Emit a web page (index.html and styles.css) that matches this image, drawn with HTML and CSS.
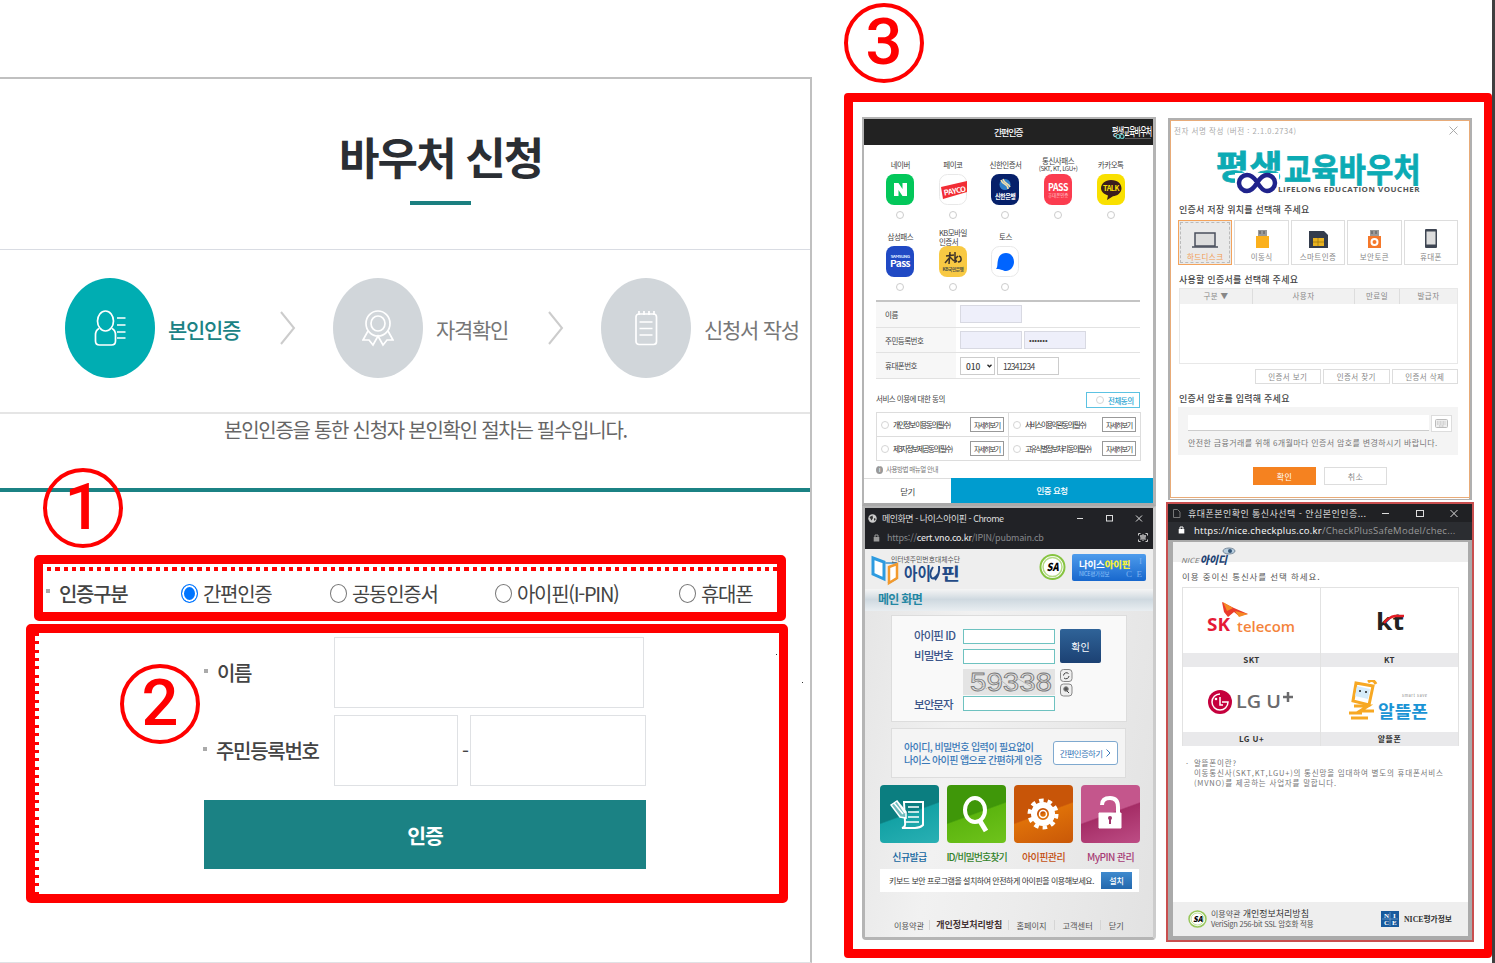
FILE: index.html
```html
<!DOCTYPE html>
<html lang="ko">
<head>
    <meta charset="UTF-8">
    <meta name="viewport" content="width=device-width, initial-scale=1.0">
    <title>바우처 신청 - 본인인증</title>
    <link rel="stylesheet" href="styles.css">
</head>
<body>
    <main class="apply">
        <header class="apply-title">
            <h1>바우처 신청</h1>
        </header>
        <ol class="steps">
            <li class="step active">
                <span class="step-icon">
                    <svg width="32" height="38" viewBox="0 0 32 38" fill="none" stroke="#fff" stroke-width="1.7"><ellipse cx="11.5" cy="12" rx="8" ry="10"/><path d="M5 19.500C2 21 1.500 23 1.500 26v6q0 4 4 4h12q4 0 4-4v-6c0-3-.5-5-3.500-6.500M23 9h8.500M23 16h8.500M23 23h8.500M23 29h8.500"/></svg>
                </span>
                <span class="step-name">본인인증</span>
            </li>
            <li class="arrow"><svg width="16" height="34" viewBox="0 0 16 34" fill="none" stroke="#ccc" stroke-width="2"><path d="M1 1l13 16L1 33"/></svg></li>
            <li class="step">
                <span class="step-icon">
                    <svg width="32" height="38" viewBox="0 0 32 38" fill="none" stroke="#fff" stroke-width="1.7"><ellipse cx="16" cy="14.500" rx="12" ry="12.500"/><ellipse cx="16" cy="14.500" rx="7" ry="7.500"/><path d="M6 22L1 31l6 0 4 5 5-9 5 9 4-5 6 0-5-9"/></svg>
                </span>
                <span class="step-name">자격확인</span>
            </li>
            <li class="arrow"><svg width="16" height="34" viewBox="0 0 16 34" fill="none" stroke="#ccc" stroke-width="2"><path d="M1 1l13 16L1 33"/></svg></li>
            <li class="step">
                <span class="step-icon">
                    <svg width="32" height="38" viewBox="0 0 32 38" fill="none" stroke="#fff" stroke-width="1.700"><rect x="6" y="5" width="20.500" height="30.500" rx="3"/><path d="M9 2v4M14 2v4M19 2v4M24 2v4M9.500 13h13M9.500 19.500h13M9.500 26h13"/></svg>
                </span>
                <span class="step-name">신청서 작성</span>
            </li>
        </ol>
        <p class="notice">본인인증을 통한 신청자 본인확인 절차는 필수입니다.</p>

        <form class="auth">
            <div class="auth-type">
                <strong class="bullet">인증구분</strong>
                <label class="opt opt1"><i class="radio on"></i>간편인증</label>
                <label class="opt opt2"><i class="radio"></i>공동인증서</label>
                <label class="opt opt3"><i class="radio"></i>아이핀(I-PIN)</label>
                <label class="opt"><i class="radio"></i>휴대폰</label>
            </div>
            <div class="auth-form">
                <div class="field">
                    <strong class="bullet">이름</strong>
                    <span class="box name"></span>
                </div>
                <div class="field field-rrn">
                    <strong class="bullet">주민등록번호</strong>
                    <span class="box rrn1"></span>
                    <em>-</em>
                    <span class="box rrn2"></span>
                </div>
                <button type="button" class="submit">인증</button>
            </div>
        </form>
    </main>
    <span class="speck speck1"></span>
    <span class="speck speck2"></span>
    <span class="num num1">1</span>
    <span class="num num2">2</span>
    <span class="num num3">3</span>

    <section class="guide">
        <div class="col col-left">

            <!-- 간편인증 -->
            <div class="simple">
                <div class="simple-head">
                    <b>간편인증</b>
                    <svg width="41" height="20" viewBox="0 0 41 20"><text x="0" y="14" font-size="11" font-weight="500" fill="#fff" textLength="39.500" lengthAdjust="spacingAndGlyphs">평생교육바우처</text><rect x="4" y="12" width="9" height="5" fill="#222"/><g fill="none" stroke="#6cc" stroke-width="1.200"><circle cx="6" cy="14.500" r="2"/><circle cx="10" cy="14.500" r="2"/></g><path d="M13 16.500h26" stroke="#888" stroke-width=".6"/></svg>
                </div>
                <div class="apps">
                    <div class="app"><span>네이버</span>
                        <svg viewBox="0 0 28 31"><rect width="28" height="31" rx="8" fill="#03c75a"/><path d="M8 22V9h4.500l4 6V9H21v13h-4.500l-4-6v6z" fill="#fff"/></svg><i></i></div>
                    <div class="app"><span>페이코</span>
                        <svg viewBox="0 0 28 31"><rect x=".5" y=".5" width="27" height="30" rx="8" fill="#fff" stroke="#e8e8e8"/><path d="M2 13l26-6v11L4 25z" fill="#f22d35"/><text x="5" y="21.500" font-size="7.500" font-weight="700" fill="#fff" textLength="22" transform="rotate(-10 5 20)" lengthAdjust="spacingAndGlyphs">PAYCO</text></svg><i></i></div>
                    <div class="app"><span>신한인증서</span>
                        <svg viewBox="0 0 28 31"><rect width="28" height="31" rx="8" fill="#06206a"/><circle cx="14" cy="10.500" r="5.500" fill="#2e7fc9"/><path d="M10 6c2 6 7 3 7 9M12 5c1 5 6 4 7 8" stroke="#f1dfae" stroke-width="1.500" fill="none"/><text x="4" y="25" font-size="6.500" font-weight="700" fill="#fff" textLength="20.500" lengthAdjust="spacingAndGlyphs">신한은행</text></svg><i></i></div>
                    <div class="app"><span>통신사패스<br><small>(SKT, KT, LGU+)</small></span>
                        <svg viewBox="0 0 28 31"><rect width="28" height="31" rx="8" fill="#fb3c4f"/><text x="4" y="16.500" font-size="10.500" font-weight="700" fill="#fff" textLength="20" lengthAdjust="spacingAndGlyphs">PASS</text><text x="4" y="23" font-size="4.500" fill="#ffc4ca" textLength="20">휴대폰인증</text></svg><i></i></div>
                    <div class="app"><span>카카오톡</span>
                        <svg viewBox="0 0 28 31"><rect width="28" height="31" rx="8" fill="#f9e000"/><path d="M14 6c7 0 10.500 4 10.500 8.500S20 22 16 22.300L10 26l1-4.500C6 20 4 17 4 14.300 4 10 8 6 14 6z" fill="#3a1d1d"/><text x="6" y="17" font-size="7" font-weight="700" fill="#f9e000" textLength="16" lengthAdjust="spacingAndGlyphs">TALK</text></svg><i></i></div>
                    <div class="app"><span>삼성패스</span>
                        <svg viewBox="0 0 28 31"><rect width="28" height="31" rx="8" fill="#2049c4"/><text x="4.500" y="12" font-size="4" font-weight="700" fill="#dbe4ff" textLength="19" lengthAdjust="spacingAndGlyphs">SAMSUNG</text><text x="4" y="21" font-size="9" font-weight="700" fill="#fff" textLength="20" lengthAdjust="spacingAndGlyphs">Pass</text></svg><i></i></div>
                    <div class="app"><span>KB모바일<br>인증서</span>
                        <svg viewBox="0 0 28 31"><rect width="28" height="31" rx="8" fill="#f8c943"/><path d="M7 10l8-1M11 6l-1 12M6 17l5-6 4 4M16 6v11M16 13l3-3M16 13l2 3M20 10c3 1 3 6-1 6" fill="none" stroke="#40342a" stroke-width="1.500"/><text x="3.500" y="24.500" font-size="5" font-weight="700" fill="#554" textLength="21" lengthAdjust="spacingAndGlyphs">KB국민은행</text></svg><i></i></div>
                    <div class="app"><span>토스</span>
                        <svg viewBox="0 0 28 31"><rect x=".5" y=".5" width="27" height="30" rx="8" fill="#fff" stroke="#e8e8e8"/><path d="M5 23c2-2 1-5 2-9 1-5 4-7 8-7 5 0 8 4 8 9s-4 9-8 9c-3 0-4-2-10-2z" fill="#0064ff"/></svg><i></i></div>
                </div>
                <div class="info">
                    <div class="info-row"><label>이름</label><span class="inp lav"></span></div>
                    <div class="info-row"><label>주민등록번호</label><span class="inp lav"></span><em></em><span class="inp lav pw">•••••••</span></div>
                    <div class="info-row"><label>휴대폰번호</label><span class="inp sel"><b>010</b><svg width="5" height="4" viewBox="0 0 5 4" fill="none" stroke="#222" stroke-width="1.300"><path d="M.5.800l2 2 2-2"/></svg></span><span class="inp tel">12341234</span></div>
                </div>
                <div class="agree-head"><span>서비스 이용에 대한 동의</span><b><i></i>전체동의</b></div>
                <div class="agree">
                    <div><i></i><span>개인정보 이용동의(필수)</span><button>자세히보기</button></div>
                    <div><i></i><span>서비스이용약관동의(필수)</span><button>자세히보기</button></div>
                    <div><i></i><span>제3자정보제공동의(필수)</span><button>자세히보기</button></div>
                    <div><i></i><span>고유식별정보처리동의(필수)</span><button>자세히보기</button></div>
                </div>
                <p class="manual"><i>i</i>사용방법 매뉴얼 안내</p>
                <div class="simple-btns"><span>닫기</span><b>인증 요청</b></div>
            </div>

            <!-- 아이핀 -->
            <div class="ipin">
                <div class="chrome">
                    <div class="chrome-title">
                        <svg width="9" height="9" viewBox="0 0 9 9"><circle cx="4.500" cy="4.500" r="4.200" fill="#ccc"/><path d="M1.500 3l3-1.500L5 4 3.500 6.500zM6 4l2 1-2 2z" fill="#333"/></svg>
                        <span>메인화면 - 나이스아이핀 - Chrome</span>
                        <svg class="win" width="72" height="9" viewBox="0 0 72 9" fill="none" stroke="#ddd"><path d="M1 4.500h6M60 1.500l6 6M66 1.500l-6 6"/><rect x="30.500" y="1.500" width="6" height="5.500"/></svg>
                    </div>
                    <div class="chrome-url">
                        <svg width="7" height="8" viewBox="0 0 7 8"><rect x=".7" y="3" width="5.600" height="4.500" fill="#999"/><path d="M2 3V1h3v2" fill="none" stroke="#999"/></svg>
                        <span>https://<b>cert.vno.co.kr</b>/IPIN/pubmain.cb</span>
                        <svg class="qr" width="10" height="9" viewBox="0 0 10 9" fill="none" stroke="#ccc"><path d="M.5 2.500V.5h2M7.500.5h2v2M9.500 6.500v2h-2M2.500 8.500h-2v-2M2 3h6M3 5h4M3 2v5M5 1v7M7 2v5"/></svg>
                    </div>
                </div>
                <div class="ipin-head">
                    <svg width="90" height="34" viewBox="0 0 90 34"><path d="M2 4l11 4v17L2 20z" fill="#fff" stroke="#2d9be0" stroke-width="3"/><path d="M14 9h11v16l-8 4" fill="none" stroke="#66a9d8" stroke-width="2"/><path d="M18 13l8-3v14l-8 5z" fill="#fff" stroke="#f29a2e" stroke-width="2.500"/><text x="20" y="8" font-size="7" fill="#555" textLength="69" lengthAdjust="spacingAndGlyphs">인터넷주민번호대체수단</text><text x="33" y="26" font-size="16.500" font-weight="700" fill="#234a86" textLength="27" lengthAdjust="spacingAndGlyphs">아이</text><path d="M62 13q-4 6-2 10t7-3M68 12q1 8-4 14" fill="none" stroke="#234a86" stroke-width="2"/><text x="70" y="26" font-size="16.500" font-weight="700" fill="#234a86" textLength="19" lengthAdjust="spacingAndGlyphs">핀</text></svg>
                    <svg class="sa" width="27" height="28" viewBox="0 0 27 28"><circle cx="13.500" cy="14" r="12" fill="#fff" stroke="#86c440" stroke-width="2"/><circle cx="13.500" cy="14" r="9.500" fill="none" stroke="#b5da86" stroke-width="1.500"/><text x="7.500" y="18" font-size="11" font-weight="900" font-style="italic" textLength="12" lengthAdjust="spacingAndGlyphs">SA</text></svg>
                    <div class="nice-banner"><p>나이스<b>아이핀</b></p><small>NICE평가정보</small><em>I<br>C &nbsp;E</em></div>
                </div>
                <h3>메인 화면</h3>
                <div class="login">
                    <div class="login-labels"><b>아이핀 ID</b><b>비밀번호</b><b class="sec">보안문자</b></div>
                    <div class="login-inputs">
                        <span></span><span></span>
                        <svg width="92" height="26" viewBox="0 0 92 26"><rect width="92" height="26" fill="#e4e4e4"/><text x="7" y="22" font-family="Liberation Sans, sans-serif" font-size="25" fill="#e0e0e0" stroke="#777" stroke-width=".8" textLength="82" lengthAdjust="spacingAndGlyphs">59338</text><path d="M8 8l16 12M30 5l20 16M52 8l20 12" stroke="#bbb"/></svg>
                        <span></span>
                    </div>
                    <div class="login-side">
                        <button>확인</button>
                        <svg width="13" height="28" viewBox="0 0 13 28" fill="#eee" stroke="#888"><rect x=".5" y=".5" width="11.500" height="12" rx="3"/><rect x=".5" y="15" width="11.500" height="12" rx="3"/><path d="M3.500 6.500a3 3 0 0 1 5-2M9 7a3 3 0 0 1-5 2" stroke="#444" fill="none"/><circle cx="6" cy="20" r="2.300" fill="#555"/><path d="M7 22l2 2" stroke="#444"/></svg>
                    </div>
                </div>
                <div class="easy"><p>아이디, 비밀번호 입력이 필요없이<br>나이스 아이핀 앱으로 간편하게 인증</p><button>간편인증하기 <svg width="5" height="8" viewBox="0 0 5 8" fill="none" stroke="#3a79b8"><path d="M.5.5L4 4 .5 7.500"/></svg></button></div>
                <div class="tiles">
                    <div class="tile t1"><svg viewBox="0 0 59 58"><path d="M24 17h19v23q-3 3-8 3H22q4-1 3-6z" fill="none" stroke="#fff" stroke-width="2"/><path d="M28 22h11M28 27h11M28 32h11M26 37h13" stroke="#fff" stroke-width="1.500"/><path d="M11 20l6-4 9 11 0 6-6-1zM14 18l9 11M17 16l8 12" stroke="#fff" stroke-width="1.500" fill="#6fbcbd"/></svg><b>신규발급</b></div>
                    <div class="tile t2"><svg viewBox="0 0 59 58"><ellipse cx="28" cy="25" rx="10" ry="12" fill="none" stroke="#fff" stroke-width="4"/><path d="M33 36l6 10" stroke="#fff" stroke-width="5"/></svg><b>ID/비밀번호찾기</b></div>
                    <div class="tile t3"><svg viewBox="0 0 59 58"><circle cx="29" cy="29" r="13.500" fill="none" stroke="#fff" stroke-width="4" stroke-dasharray="4.500 3.980"/><circle cx="29" cy="29" r="9" fill="none" stroke="#fff" stroke-width="6"/><circle cx="29" cy="29" r="3.500" fill="none" stroke="#fff" stroke-width="1.500"/></svg><b>아이핀관리</b></div>
                    <div class="tile t4"><svg viewBox="0 0 59 58"><path d="M21 20q0-7 8-7t8 9v7" fill="none" stroke="#fff" stroke-width="4"/><path d="M18 28h22v15H18z" fill="#fff" stroke="#fff"/><circle cx="29" cy="33" r="2" fill="#a2346c"/><path d="M29 33v6" stroke="#a2346c" stroke-width="2"/></svg><b>MyPIN 관리</b></div>
                </div>
                <div class="keyboard"><span>키보드 보안 프로그램을 설치하여 안전하게 아이핀을 이용해보세요.</span><button>설치</button></div>
                <div class="ipin-foot"><span>이용약관</span><b>개인정보처리방침</b><span>홈페이지</span><span>고객센터</span><span>닫기</span></div>
            </div>
        </div>

        <div class="col col-right">

            <!-- 공동인증서 -->
            <div class="cert">
                <div class="cert-head"><span>전자 서명 작성 (버전 : 2.1.0.2734)</span><svg width="9" height="9" viewBox="0 0 9 9" stroke="#aaa"><path d="M.5.5l8 8M8.500.5l-8 8"/></svg></div>
                <svg class="cert-logo" width="206" height="48" viewBox="0 0 206 48">
                    <g font-size="36" font-weight="700" fill="#0cabb4" stroke="#0cabb4" stroke-width=".8">
                        <text x="0" y="30" font-size="33" textLength="67" lengthAdjust="spacingAndGlyphs">평생</text>
                        <text x="68" y="33" font-size="33" textLength="137" lengthAdjust="spacingAndGlyphs">교육바우처</text>
                    </g>
                    <path d="M19 24h44v23H19z" fill="#fff"/>
                    <path d="M41 33c-4-6-7-7-10-7a8 8 0 0 0 0 16c4 0 7-3 10-8 3-5 6-8 10-8a8 8 0 0 1 0 16c-3 0-6-2-10-9z" fill="none" stroke="#20238c" stroke-width="4.500"/>
                    <text x="62" y="43" font-family="Open Sans, sans-serif" font-size="6.500" font-weight="700" fill="#555" textLength="142" lengthAdjust="spacingAndGlyphs">LIFELONG EDUCATION VOUCHER</text>
                </svg>
                <h4>인증서 저장 위치를 선택해 주세요</h4>
                <div class="media">
                    <div class="on"><svg width="28" height="22" viewBox="0 0 28 22"><rect x="4" y="5" width="20" height="13" fill="#ddd" stroke="#4a4f5c" stroke-width="1.500"/><path d="M1 19h26" stroke="#4a4f5c" stroke-width="1.500"/></svg><span>하드디스크</span></div>
                    <div><svg width="28" height="22" viewBox="0 0 28 22"><rect x="10" y="2" width="9" height="7" fill="#999"/><path d="M12 3v3M16 3v3" stroke="#555"/><rect x="8" y="8" width="13" height="12" fill="#fbb01c"/></svg><span>이동식</span></div>
                    <div><svg width="28" height="22" viewBox="0 0 28 22"><path d="M5 3h15l4 4v13H5z" fill="#343c4c"/><rect x="9" y="10" width="11" height="8" fill="#e9b220"/><path d="M9 14h11M14 10v8" stroke="#9a7410" stroke-width=".7"/></svg><span>스마트인증</span></div>
                    <div><svg width="28" height="22" viewBox="0 0 28 22"><rect x="10" y="2" width="9" height="7" fill="#999"/><path d="M12 3v3M16 3v3" stroke="#555"/><rect x="8" y="8" width="13" height="12" fill="#f5782a"/><circle cx="14.500" cy="14" r="3" fill="none" stroke="#fff" stroke-width="2"/></svg><span>보안토큰</span></div>
                    <div><svg width="28" height="22" viewBox="0 0 28 22"><rect x="8" y="1" width="12" height="19" rx="1" fill="#3f4653"/><rect x="9.500" y="3.500" width="9" height="13" fill="#ddd"/></svg><span>휴대폰</span></div>
                </div>
                <h4 class="h-use">사용할 인증서를 선택해 주세요</h4>
                <div class="cert-table"><div><span>구분 ▼</span><span>사용자</span><span>만료일</span><span>발급자</span></div></div>
                <div class="cert-tools"><span>인증서 보기</span><span>인증서 찾기</span><span>인증서 삭제</span></div>
                <h4 class="h-pw">인증서 암호를 입력해 주세요</h4>
                <div class="cert-pw">
                    <div><span></span><b><svg width="13" height="9" viewBox="0 0 13 9"><rect x=".5" y=".5" width="12" height="8" rx="1" fill="#eee" stroke="#bbb"/><path d="M2 3h9M2 5h9M4 7h5" stroke="#bbb" stroke-dasharray="1 .500"/></svg></b></div>
                    <p>안전한 금융거래를 위해 6개월마다 인증서 암호를 변경하시기 바랍니다.</p>
                </div>
                <div class="cert-btns"><b>확인</b><span>취소</span></div>
            </div>

            <!-- 휴대폰 -->
            <div class="phone">
                <div class="phone-title">
                    <svg width="8" height="9" viewBox="0 0 8 9" fill="none" stroke="#777"><path d="M.5.5h4l2.500 2.500v5.500H.5z"/></svg>
                    <span>휴대폰본인확인 통신사선택 - 안심본인인증...</span>
                    <svg class="win" width="77" height="9" viewBox="0 0 77 9" fill="none" stroke="#ddd"><path d="M1 4.500h7M69.500 1l7 7M76.500 1l-7 7"/><rect x="35.500" y="1.500" width="7" height="6"/></svg>
                </div>
                <div class="phone-url">
                    <svg width="7" height="8" viewBox="0 0 7 8"><rect x=".7" y="3" width="5.600" height="4.500" fill="#fff"/><path d="M2 3V1h3v2" fill="none" stroke="#fff"/></svg>
                    <span>https://nice.checkplus.co.kr<em>/CheckPlusSafeModel/chec...</em></span>
                </div>
                <div class="phone-page">
                    <div class="phone-logo"><svg width="58" height="22" viewBox="0 0 58 22"><text x="0" y="17" font-size="7" font-style="italic" fill="#777" textLength="18" lengthAdjust="spacingAndGlyphs">NICE</text><text x="19" y="18" font-size="11" font-weight="900" font-style="italic" fill="#1d4273" textLength="27" lengthAdjust="spacingAndGlyphs">아이디</text><ellipse cx="48" cy="5" rx="6" ry="3" fill="#b9cfe0" stroke="#789"/><circle cx="49" cy="5" r="2" fill="#357"/></svg></div>
                    <p class="phone-lead">이용 중이신 통신사를 선택 하세요.</p>
                    <div class="carriers">
                        <div><svg width="96" height="44" viewBox="0 0 96 44"><path d="M18 1l12 6 14 6-9 2-5-4-6 5-4-5z" fill="#ea3a2b"/><path d="M19 1l10 6-6 3z" fill="#f58a25"/><path d="M31 10l13 3-9 3z" fill="#f58a25"/><text x="3" y="30" font-family="Open Sans, sans-serif" font-size="18" font-weight="700" fill="#e51937" textLength="23" lengthAdjust="spacingAndGlyphs">SK</text><text x="33" y="30.500" font-family="Open Sans, sans-serif" font-size="14" font-weight="600" fill="#f4843c" textLength="58" lengthAdjust="spacingAndGlyphs">telecom</text></svg><b>SKT</b></div>
                        <div><svg width="96" height="44" viewBox="0 0 96 44"><text x="34" y="29" font-family="Open Sans, sans-serif" font-size="24" font-weight="700" fill="#222" textLength="28" lengthAdjust="spacingAndGlyphs">kt</text><path d="M42 22q5-6 11-7h9" fill="none" stroke="#e31c25" stroke-width="2.500"/></svg><b>KT</b></div>
                        <div><svg width="96" height="44" viewBox="0 0 96 44"><circle cx="16" cy="22" r="12" fill="#c5003d"/><path d="M16 14a8 8 0 1 0 8 8h-6M16 17v8h3" fill="none" stroke="#fff" stroke-width="1.500"/><circle cx="12" cy="19" r="1.300" fill="#fff"/><text x="32" y="28" font-family="Open Sans, sans-serif" font-size="18" font-weight="600" fill="#6b6b6d" textLength="45" lengthAdjust="spacingAndGlyphs">LG U</text><path d="M84 12v10M79 17h10" stroke="#6b6b6d" stroke-width="2.500"/></svg><b>LG U+</b></div>
                        <div><svg width="96" height="44" viewBox="0 0 96 44"><path d="M14 3l17 3-4 19-16-4z" fill="#fff" stroke="#f7a823" stroke-width="3"/><path d="M15 6l13 3-2 10-13-3z" fill="#d6ecfa"/><circle cx="18" cy="11" r="1" fill="#222"/><circle cx="24" cy="12" r="1" fill="#222"/><path d="M26 2q5-4 8 2M12 26h14l-8 5h14M7 33h13M9 38h17" fill="none" stroke="#f7a823" stroke-width="3"/><text x="36" y="38" font-size="17" font-weight="700" fill="#1a94d5" textLength="50" lengthAdjust="spacingAndGlyphs">알뜰폰</text><text x="60" y="17" font-size="4" fill="#888" textLength="25">smart save</text></svg><b>알뜰폰</b></div>
                    </div>
                    <div class="phone-note"><i>·</i><p>알뜰폰이란?<br>이동통신사(SKT,KT,LGU+)의 통신망을 임대하여 별도의 휴대폰서비스<br>(MVNO)를 제공하는 사업자를 말합니다.</p></div>
                    <div class="phone-foot">
                        <svg width="19" height="18" viewBox="0 0 19 18"><ellipse cx="9.500" cy="9" rx="8.500" ry="8" fill="#fff" stroke="#97c75a" stroke-width="1.500"/><ellipse cx="9.500" cy="9" rx="6.500" ry="6" fill="none" stroke="#c0dfa0"/><text x="5" y="12" font-size="8" font-weight="900" font-style="italic" textLength="9.500" lengthAdjust="spacingAndGlyphs">SA</text></svg>
                        <p>이용약관 <b>개인정보처리방침</b><br><small>VeriSign 256-bit SSL 암호화 적용</small></p>
                        <svg class="nice" width="72" height="16" viewBox="0 0 72 16"><rect width="18" height="16" fill="#185a9d"/><g font-family="Liberation Serif, serif" font-size="7" font-weight="700" fill="#fff"><text x="3" y="6.500">N</text><text x="12" y="6.500">I</text><text x="3" y="14">C</text><text x="11" y="14">E</text></g><path d="M9 1v14M1 8h16" stroke="#8bb4dc" stroke-width=".6"/><text x="23" y="11" font-family="Liberation Serif, Noto Sans CJK KR, serif" font-size="8" font-weight="700" fill="#333" textLength="48" lengthAdjust="spacingAndGlyphs">NICE평가정보</text></svg>
                    </div>
                </div>
            </div>
        </div>
    </section>
    <aside class="edge"></aside>
</body>
</html>
```
FILE: styles.css
```css
* {
    box-sizing: border-box;
}
body {
    margin: 0;
    width: 1495px;
    height: 963px;
    overflow: hidden;
    display: flex;
    align-items: flex-start;
    position: relative;
    background: #fff;
    color: #333;
    font-family: "Noto Sans CJK KR", "Noto Sans", sans-serif;
    white-space: nowrap;
}
h1, h3, h4, p, ol {
    margin: 0;
    padding: 0;
    list-style: none;
}
i, em {
    font-style: normal;
}
button {
    font-family: inherit;
    padding: 0;
    border: 0;
    background: none;
}
svg {
    display: block;
    flex: none;
}

/* 신청 화면 */
.apply {
    width: 812px;
    height: 886px;
    margin-top: 77px;
    flex: none;
    border-top: 2px solid #c0c0c0;
    border-right: 2px solid #c0c0c0;
    border-bottom: 1px solid #e0e2e5;
}
.apply-title {
    height: 171px;
    border-bottom: 1px solid #d9dce3;
    padding: 46px 0 0 339px;
}
.apply-title h1 {
    width: 204px;
    height: 80px;
    font-size: 44px;
    line-height: 62px;
    font-weight: 700;
    letter-spacing: -1.9px;
    color: #2a2e33;
}
.apply-title h1::after {
    content: "";
    display: block;
    width: 61px;
    height: 4px;
    margin: 14px 0 0 71px;
    background: #1b7f80;
}
.steps {
    display: flex;
    align-items: center;
    height: 164px;
    padding: 0 0 6px 65px;
    border-bottom: 2px solid #e5e5e5;
}
.step {
    display: flex;
    align-items: center;
    width: 215px;
    flex: none;
}
.step-icon {
    width: 90px;
    height: 100px;
    border-radius: 50%;
    background: #d1d6da;
    display: flex;
    align-items: center;
    justify-content: center;
    flex: none;
}
.active .step-icon {
    background: #00adb2;
}
.step-name {
    margin: 1px 0 0 13px;
    font-size: 21px;
    letter-spacing: -1.3px;
    color: #777;
}
.active .step-name {
    color: #1b8284;
    font-weight: 500;
}
.arrow {
    width: 53px;
    flex: none;
}
.notice {
    height: 74px;
    padding-left: 224px;
    font-size: 20px;
    line-height: 32px;
    letter-spacing: -1.27px;
    color: #666;
}
.auth {
    border-top: 4px solid #1b8284;
    height: 470px;
    padding: 63px 0 0 26px;
}
.auth-type {
    width: 752px;
    height: 66px;
    margin-left: 8px;
    border: 9px solid #f00;
    border-radius: 5px;
    display: flex;
    align-items: center;
    padding: 10px 0 0 3px;
    font-size: 20px;
    letter-spacing: -1.3px;
    color: #444;
    background: repeating-linear-gradient(90deg, transparent 0 4px, #f00 4px 8.35px) 0 3px / 100% 4px no-repeat;
}
.bullet {
    font-weight: 500;
    display: flex;
    align-items: center;
}
.bullet::before {
    content: "";
    width: 4px;
    height: 4px;
    margin: 0 9px 4px 0;
    background: #aaa;
}
.auth-type .bullet {
    width: 135px;
}
.opt {
    display: flex;
    align-items: center;
}
.opt1 {
    width: 149px;
}
.opt2 {
    width: 165px;
}
.opt3 {
    width: 184px;
}
.radio {
    width: 17px;
    height: 19px;
    margin-right: 5px;
    border: 1px solid #777;
    border-radius: 50%;
}
.radio.on {
    border: 1.5px solid #0075ff;
    background: #0075ff;
    box-shadow: inset 0 0 0 2px #fff;
}
.auth-form {
    width: 762px;
    height: 279px;
    margin-top: 3px;
    border: 9px solid #f00;
    border-radius: 5px;
    padding: 4px 0 0 169px;
    background: repeating-linear-gradient(#f00 0 3px, transparent 3px 8.35px) 0 0 / 4px 100% no-repeat;
}
.field {
    display: flex;
    align-items: center;
    height: 71px;
    margin-bottom: 7px;
    font-size: 20px;
    letter-spacing: -1.3px;
    color: #444;
}
.field .bullet {
    width: 130px;
}
.field-rrn .bullet {
    margin-left: -1px;
    width: 131px;
}
.field em {
    width: 12px;
    padding-left: 4px;
}
.box {
    height: 71px;
    border: 1.5px solid #dfe1e4;
    background: #fff;
}
.name {
    width: 310px;
}
.rrn1 {
    width: 124px;
}
.rrn2 {
    width: 176px;
}
.submit {
    width: 442px;
    height: 69px;
    margin-top: 14px;
    background: #1b8284;
    color: #fff;
    font-size: 20.5px;
    font-weight: 700;
    letter-spacing: -1px;
    display: block;
}
.speck {
    position: absolute;
    width: 1px;
    height: 1px;
    background: #333;
}
.speck1 {
    left: 776px;
    top: 654px;
}
.speck2 {
    left: 802px;
    top: 682px;
}

/* 번호 표시 */
.num {
    position: absolute;
    width: 80px;
    height: 80px;
    border: 4.5px solid #f00;
    border-radius: 50%;
    color: #f00;
    font-family: Roboto, sans-serif;
    font-size: 65px;
    font-weight: 500;
    line-height: 71px;
    text-align: center;
}
.num1 {
    left: 43px;
    top: 468px;
}
.num2 {
    left: 120px;
    top: 664px;
}
.num3 {
    left: 844px;
    top: 3px;
}

/* 인증 수단 안내 */
.guide {
    width: 648px;
    height: 865px;
    margin: 93px 0 0 32px;
    flex: none;
    border: 9px solid #f00;
    border-right-width: 8px;
    border-radius: 4px;
    padding: 15px 0 0 9px;
    display: flex;
    gap: 10px;
}
.col-left {
    width: 294px;
    flex: none;
}
.col-right {
    width: 308px;
    flex: none;
    padding-top: 1px;
}
.edge {
    width: 3px;
    height: 963px;
    background: #404040;
    flex: none;
}

.simple {
    height: 389px;
    border: 2px solid #b4b4b4;
    border-right-width: 3px;
    border-bottom: 3px solid #aaa;
    font-size: 7.5px;
    letter-spacing: -0.5px;
    line-height: 9px;
    color: #444;
}
.simple-head {
    height: 26px;
    background: #222;
    color: #fff;
    display: flex;
    align-items: center;
    padding-left: 130px;
    font-size: 9px;
    letter-spacing: -1.2px;
}
.simple-head b {
    width: 118px;
    font-weight: 500;
}
.apps {
    display: grid;
    grid-template-columns: repeat(5, 52.6px);
    grid-auto-rows: 72px;
    padding: 10px 0 0 10px;
    height: 155px;
}
.app {
    display: flex;
    flex-direction: column;
    align-items: center;
}
.app span {
    height: 19px;
    display: grid;
    align-content: center;
    justify-items: center;
}
.app small {
    font-size: 6.3px;
    line-height: 8px;
}
.app svg {
    width: 28px;
    height: 31px;
}
.app i {
    width: 8px;
    height: 8px;
    margin-top: 6px;
    border: 1px solid #ccc;
    border-radius: 50%;
}
.info {
    width: 264px;
    margin-left: 12px;
    border-top: 2px solid #c4c4c4;
}
.info-row {
    display: flex;
    align-items: center;
    height: 25.7px;
    border-bottom: 1px solid #e2e2e2;
}
.info-row label {
    width: 80px;
    height: 100%;
    padding-left: 9px;
    line-height: 25px;
    background: #f7f7f7;
    margin-right: 4px;
}
.info-row em {
    width: 2px;
}
.inp {
    width: 62px;
    height: 18px;
    border: 1px solid #ccc;
    line-height: 16px;
}
.lav {
    background: #eeeffa;
    border-color: #d8d9e2;
}
.pw {
    padding-left: 4px;
    font-size: 7px;
    font-weight: 700;
    letter-spacing: 0;
}
.sel {
    width: 35px;
    margin-right: 2px;
    padding: 0 2px 0 5px;
    display: flex;
    align-items: center;
    justify-content: space-between;
    font-size: 8.5px;
    letter-spacing: -0.1px;
}
.sel b {
    font-weight: 500;
}
.tel {
    padding-left: 5px;
    font-size: 8.5px;
    letter-spacing: -0.8px;
}
.agree-head {
    display: flex;
    justify-content: space-between;
    align-items: center;
    width: 264px;
    height: 16px;
    margin: 13px 0 4px 12px;
}
.agree-head span {
    margin-top: -3px;
}
.agree-head b {
    width: 54px;
    height: 16px;
    border: 1px solid #5cc2e2;
    color: #2aa6d3;
    font-weight: 500;
    display: flex;
    align-items: center;
    padding-left: 9px;
    gap: 4px;
}
.agree-head i, .agree i {
    width: 8px;
    height: 8px;
    border: 1px solid #d5d5d5;
    border-radius: 50%;
    flex: none;
}
.agree {
    width: 265px;
    height: 49px;
    margin-left: 12px;
    display: grid;
    grid-template-columns: 1fr 1fr;
    border-top: 1px solid #ddd;
    border-left: 1px solid #ddd;
}
.agree div {
    border-right: 1px solid #ddd;
    border-bottom: 1px solid #ddd;
    display: flex;
    align-items: center;
    padding: 0 4px;
    letter-spacing: -1.5px;
}
.agree span {
    flex: 1;
    margin-left: 4px;
    color: #333;
}
.agree div:nth-child(2) span, .agree div:nth-child(4) span {
    letter-spacing: -1.6px;
}
.agree button {
    width: 34px;
    height: 15px;
    border: 1px solid #999;
    font-size: 7px;
    letter-spacing: -1.2px;
    color: #333;
}
.manual {
    height: 17px;
    padding-left: 12px;
    display: flex;
    align-items: center;
    font-size: 6.5px;
    letter-spacing: -0.5px;
    color: #777;
}
.manual i {
    width: 7px;
    height: 8px;
    margin-right: 3px;
    border-radius: 50%;
    background: #999;
    color: #fff;
    text-align: center;
    line-height: 7px;
}
.simple-btns {
    display: flex;
    height: 25px;
    text-align: center;
    line-height: 25px;
    font-size: 8.5px;
}
.simple-btns span {
    width: 87px;
    border-top: 1px solid #ddd;
}
.simple-btns b {
    flex: 1;
    background: #009ccf;
    color: #fff;
    font-weight: 500;
}

.ipin {
    height: 434px;
    border: 3px solid #b5b5b5;
    border-top-width: 2px;
    border-right-color: #ccc;
    border-radius: 0 0 4px 4px;
    background: linear-gradient(100deg, #e4e4e4, #f1f1f1 35%, #ececec 60%, #e2e2e2);
}
.chrome {
    height: 41px;
    background: #212226;
    color: #ddd;
    font-size: 9px;
    padding: 1px 5px 0 3px;
}
.chrome-title {
    display: flex;
    align-items: center;
    height: 19px;
    gap: 5px;
    letter-spacing: -0.5px;
}
.win, .qr {
    margin-left: auto;
}
.chrome-url {
    display: flex;
    align-items: center;
    height: 19px;
    padding-left: 5px;
    gap: 7px;
    color: #85878b;
    letter-spacing: -0.2px;
}
.chrome-url b {
    color: #eee;
    font-weight: 400;
}
.ipin-head {
    height: 40px;
    padding: 5px 7px 0 6px;
    background: #eee;
    display: flex;
    align-items: flex-start;
}
.sa {
    margin: -1px 6px 0 78px;
}
.nice-banner {
    position: relative;
    width: 74px;
    height: 27px;
    padding: 4px 0 0 7px;
    border-radius: 2px;
    background: linear-gradient(#4e9cec, #1767cd);
    color: #fff;
}
.nice-banner p {
    font-size: 9.5px;
    font-weight: 700;
    line-height: 12px;
    letter-spacing: -0.2px;
}
.nice-banner p b {
    color: #f5f03b;
}
.nice-banner small {
    display: block;
    font-size: 5.5px;
    line-height: 8px;
    color: #8fc2fa;
    letter-spacing: -0.3px;
}
.nice-banner em {
    position: absolute;
    right: 4px;
    top: 1px;
    font: 9px/13px "Liberation Serif", serif;
    color: #7ab0f0;
    text-align: right;
}
.ipin h3 {
    height: 22px;
    padding-left: 13px;
    font-size: 12px;
    line-height: 20px;
    letter-spacing: -0.7px;
    color: #2387a3;
    background: linear-gradient(#f5f5f5, #cfd9e0 48%, #e9eef1);
}
.login {
    width: 236px;
    height: 107px;
    margin: 4px 0 0 26px;
    padding: 13px 0 0 22px;
    display: flex;
    border: 1px solid #ddd;
    background: #f9f9f9;
}
.login-labels {
    width: 49px;
    font-size: 11.5px;
    line-height: 20px;
    letter-spacing: -0.9px;
    color: #3c5589;
}
.login-labels b {
    display: block;
    margin-top: -4px;
    margin-bottom: 4px;
    font-weight: 500;
}
.login-labels .sec {
    margin-top: 29px;
}
.login-inputs span {
    display: block;
    width: 92px;
    height: 15px;
    margin-bottom: 5px;
    border: 1px solid #6ec2c0;
    background: #fff;
}
.login-inputs svg + span {
    margin-top: 1px;
}
.login-side {
    margin-left: 5px;
}
.login-side button {
    width: 41px;
    height: 34px;
    margin-bottom: 6px;
    display: block;
    background: linear-gradient(#2f6398, #1c4173);
    border-radius: 2px;
    color: #fff;
    font-size: 10px;
}
.easy {
    width: 235px;
    height: 50px;
    margin: 6px 0 7px 26px;
    padding: 0 7px 0 12px;
    border: 1px solid #ddd;
    background: #f4f4f4;
    display: flex;
    align-items: center;
    justify-content: space-between;
    font-size: 10px;
    line-height: 13px;
    letter-spacing: -0.6px;
    color: #3a79b8;
    font-weight: 500;
}
.easy button {
    width: 65px;
    height: 24px;
    border: 1px solid #7fa9cf;
    border-radius: 3px;
    background: #fff;
    color: #3a79b8;
    font-size: 8.5px;
    letter-spacing: -0.7px;
    display: flex;
    align-items: center;
    justify-content: center;
    gap: 4px;
}
.tiles {
    display: flex;
    gap: 8px;
    padding-left: 15px;
    height: 84px;
}
.tile {
    width: 59px;
    display: flex;
    flex-direction: column;
    align-items: center;
    font-size: 10px;
    line-height: 28px;
    letter-spacing: -0.6px;
}
.tile svg {
    width: 59px;
    height: 58px;
    border-radius: 4px;
}
.tile b {
    font-weight: 500;
}
.t1 {
    color: #14669f;
}
.t1 svg {
    background: linear-gradient(160deg, #0b7e80 48%, #14a2a5 50%, #2ab0b4);
}
.t2 {
    color: #33832a;
    letter-spacing: -1px;
}
.t2 svg {
    background: linear-gradient(160deg, #3f9709 48%, #5cb50f 50%, #6fc31c);
}
.t3 {
    color: #c44f12;
}
.t3 svg {
    background: linear-gradient(160deg, #c85508 48%, #df7109 50%, #c95808);
}
.t4 {
    color: #a73c76;
}
.t4 svg {
    background: linear-gradient(160deg, #c4568c 48%, #a52d66 50%, #bd4d85);
}
.keyboard {
    width: 259px;
    height: 23px;
    margin-left: 15px;
    padding: 0 7px 0 9px;
    background: #fff;
    display: flex;
    align-items: center;
    justify-content: space-between;
    font-size: 8px;
    letter-spacing: -0.48px;
}
.keyboard button {
    width: 31px;
    height: 17px;
    background: linear-gradient(#3f8ace, #2468ad);
    color: #fff;
    font-size: 8px;
    font-weight: 500;
}
.ipin-foot {
    display: flex;
    align-items: center;
    height: 20px;
    margin-top: 23px;
    padding-left: 29px;
    font-size: 8.2px;
    color: #555;
}
.ipin-foot span + span {
    margin-left: 7px;
    padding-left: 8px;
    border-left: 1px solid #d5d5d5;
    line-height: 10px;
}
.ipin-foot b {
    font-size: 9px;
    font-weight: 700;
    color: #433;
    margin: 0 6px 0 5px;
    padding-left: 6px;
    border-left: 1px solid #d5d5d5;
    line-height: 10px;
}
.ipin-foot b + span {
    padding-left: 7px;
    border-left: 1px solid #d5d5d5;
    line-height: 10px;
}

/* 공동인증서 창 */
.cert {
    width: 304px;
    height: 382px;
    margin-left: 2px;
    border: 2px solid #b0b0b0;
    border-right-width: 3px;
    border-bottom-width: 1px;
    outline: 1px solid #e8ab78;
    outline-offset: -3px;
    padding: 0 11px 0 9px;
    font-size: 8px;
    line-height: 10px;
    color: #888;
    letter-spacing: 0.4px;
}
.cert-head {
    height: 21px;
    margin: 0 0 0 -5px;
    display: flex;
    align-items: center;
    justify-content: space-between;
    font-size: 7.5px;
    letter-spacing: 0.55px;
    color: #aaa;
}
.cert-logo {
    margin: 8px 0 0 37px;
}
.cert h4 {
    font-size: 9px;
    line-height: 12px;
    font-weight: 500;
    letter-spacing: 0.25px;
    color: #444;
    margin: 7px 0 4px;
}
.media {
    display: flex;
    gap: 2px;
    margin-left: -1px;
}
.media div {
    width: 54.5px;
    height: 45px;
    border: 1px solid #ddd;
    display: flex;
    flex-direction: column;
    align-items: center;
    padding-top: 7px;
    gap: 2px;
    font-size: 7.5px;
}
.media .on {
    border: 1.5px solid #f3a35c;
    outline: 1px dashed #bbb;
    outline-offset: -3px;
    background: #eaeaea;
    color: #f29a4f;
}
.cert .h-use {
    margin: 9px 0 2px;
}
.cert-table {
    height: 76px;
    border: 1px solid #e8e8e8;
}
.cert-table div {
    display: grid;
    grid-template-columns: 72px 102px 45px 1fr;
    height: 15px;
    background: #f1f1f1;
    line-height: 14px;
    text-align: center;
    font-size: 7.5px;
}
.cert-table span + span {
    border-left: 1px solid #ddd;
}
.cert-tools {
    display: flex;
    justify-content: flex-end;
    gap: 2px;
    margin-top: 5px;
}
.cert-tools span {
    width: 66.5px;
    height: 15px;
    border: 1px solid #ddd;
    text-align: center;
    line-height: 13px;
    font-size: 7.5px;
}
.cert .h-pw {
    margin: 9px 0 2px;
}
.cert-pw {
    height: 48px;
    margin-left: -1px;
    padding: 8px 6px 0 10px;
    background: #f4f4f4;
}
.cert-pw div {
    display: flex;
    justify-content: space-between;
}
.cert-pw div span {
    width: 241px;
    height: 16px;
    background: #fff;
    border-bottom: 1px solid #ccc;
}
.cert-pw b {
    width: 21px;
    height: 17px;
    border: 1px solid #ddd;
    background: #fff;
    display: flex;
    align-items: center;
    justify-content: center;
}
.cert-pw p {
    line-height: 21px;
    letter-spacing: 0.36px;
    color: #777;
}
.cert-btns {
    display: flex;
    gap: 8px;
    margin: 12px 0 0 74px;
    text-align: center;
    line-height: 17px;
}
.cert-btns b, .cert-btns span {
    width: 63px;
    height: 18px;
    border: 1px solid #ddd;
    font-weight: 400;
}
.cert-btns b {
    background: #f58220;
    border-color: #f58220;
    color: #fff;
}

/* 휴대폰 본인확인 창 */
.phone {
    height: 440px;
    margin-top: 2px;
    border: 2px solid #c94f4f;
    background: #aaa;
    color: #555;
    font-size: 8px;
}
.phone-title, .phone-url {
    display: flex;
    align-items: center;
    height: 18px;
    padding: 0 14px 0 5px;
    gap: 7px;
    background: #202124;
    color: #ddd;
    font-size: 9px;
    letter-spacing: 0.45px;
}
.phone-url {
    background: #2b2d31;
    padding: 0 14px 2px 10px;
    gap: 9px;
    color: #fff;
    font-family: "Open Sans", sans-serif;
    font-size: 9.5px;
    letter-spacing: 0.25px;
}
.phone-url em {
    color: #999;
}
.phone-page {
    height: 394px;
    margin: 2px 4px 0 5px;
    background: #fff;
    display: flex;
    flex-direction: column;
}
.phone-logo {
    height: 20px;
    padding: 4px 0 0 8px;
    background: #eee;
}
.phone-lead {
    padding-left: 9px;
    margin-top: 4px;
    height: 21px;
    line-height: 20px;
    font-size: 8.5px;
    letter-spacing: 0.9px;
}
.carriers {
    display: grid;
    grid-template-columns: 1fr 1fr;
    width: 277px;
    margin-left: 9px;
    border-top: 1px solid #e2e2e2;
    border-left: 1px solid #e2e2e2;
}
.carriers div {
    height: 79px;
    border-right: 1px solid #e2e2e2;
    display: flex;
    flex-direction: column;
    align-items: center;
    padding-top: 13px;
}
.carriers b {
    width: 100%;
    margin-top: 8px;
    height: 14px;
    line-height: 14px;
    background: #e9e9eb;
    text-align: center;
    color: #333;
    letter-spacing: 0.4px;
}
.phone-note {
    display: flex;
    gap: 5px;
    margin: 12px 0 0 13px;
    font-size: 7.5px;
    line-height: 10px;
    letter-spacing: 0.8px;
    color: #777;
}
.phone-foot {
    height: 34px;
    margin-top: auto;
    padding: 0 15px;
    background: #eee;
    display: flex;
    align-items: center;
    line-height: 9px;
    font-size: 8px;
}
.phone-foot p {
    margin-left: 4px;
    line-height: 10px;
}
.phone-foot b {
    font-size: 9px;
    font-weight: 400;
    color: #333;
}
.phone-foot small {
    font-size: 7.5px;
    letter-spacing: -0.25px;
}
.nice {
    margin-left: auto;
}
```
